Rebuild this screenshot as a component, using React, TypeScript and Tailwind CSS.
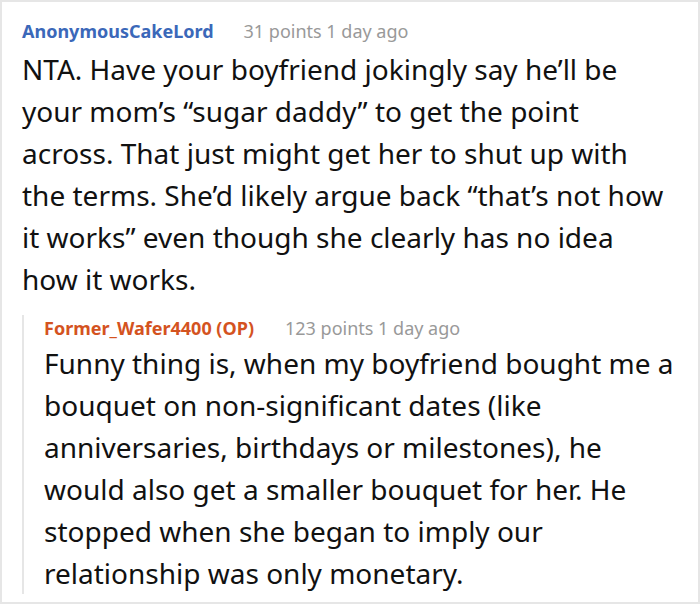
import React from "react";

export default function App() {
  return (
    <div className="w-[700px] h-[604px] bg-white border-2 border-[#e6e6e6] overflow-hidden font-['Noto_Sans',sans-serif]">
      <div className="pl-[20px] pr-[25px] pt-[16px]">
        <div className="flex items-baseline text-[18px] leading-[26px]">
          <span className="font-bold text-[#3b68b9]">AnonymousCakeLord</span>
          <span className="ml-[30px] text-[#999999]">31 points 1 day ago</span>
        </div>
        <p className="text-[28px] leading-[42px] text-[#111111] mt-[4px]">
          NTA. Have your boyfriend jokingly say he’ll be your mom’s “sugar daddy” to get the point across. That just might get her to shut up with the terms. She’d likely argue back “that’s not how it works” even though she clearly has no idea how it works.
        </p>
        <div className="mt-[28px] -mr-[4px] border-l-2 border-[#e6e6e6] pl-[20px]">
          <div className="-mt-[13px] flex items-baseline text-[18px] leading-[26px]">
            <span className="font-bold text-[#d4531f]">Former_Wafer4400 (OP)</span>
            <span className="ml-[31px] text-[#999999]">123 points 1 day ago</span>
          </div>
          <p className="text-[28px] leading-[42px] text-[#111111] mt-[1px]">
            Funny thing is, when my boyfriend bought me a bouquet on non-significant dates (like anniversaries, birthdays or milestones), he would also get a smaller bouquet for her. He stopped when she began to imply our relationship was only monetary.
          </p>
        </div>
      </div>
    </div>
  );
}
